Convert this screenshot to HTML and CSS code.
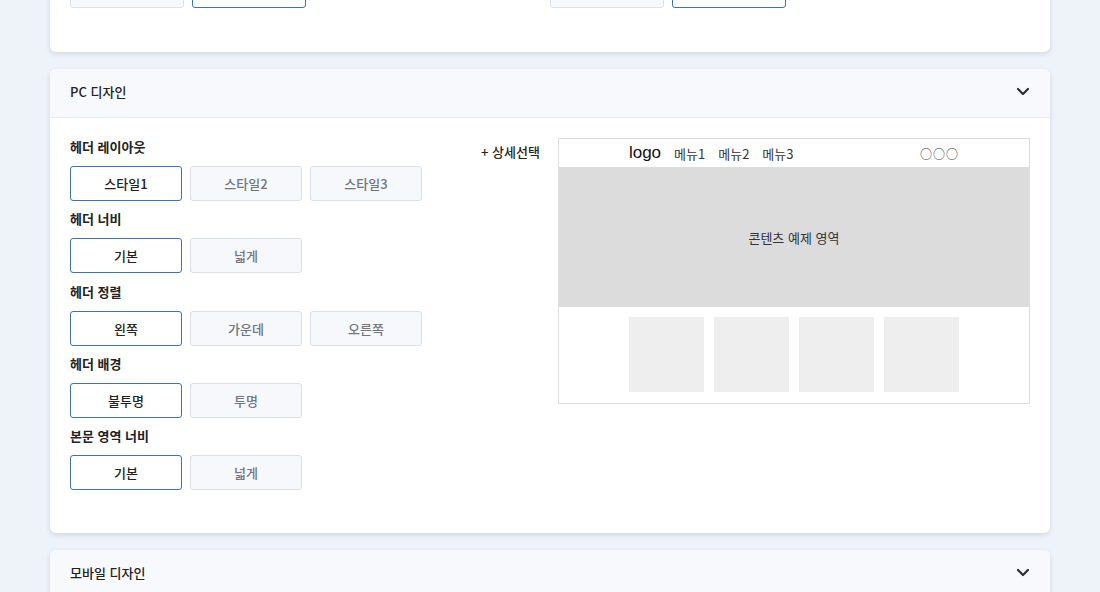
FILE: index.html
```html
<!DOCTYPE html>
<html lang="ko">
<head>
    <title>디자인 설정</title>
    <link rel="stylesheet" href="styles.css">
</head>
<body>
    <div class="page">
        <!-- 이전 섹션 (스크롤로 윗부분이 가려짐) -->
        <div class="card">
            <div class="card-body two-col">
                <div class="col">
                    <div class="btn-group wide">
                        <button class="opt">옵션1</button>
                        <button class="opt active">옵션2</button>
                    </div>
                </div>
                <div class="col">
                    <div class="btn-group wide">
                        <button class="opt">옵션1</button>
                        <button class="opt active">옵션2</button>
                    </div>
                </div>
            </div>
        </div>

        <!-- PC 디자인 -->
        <div class="card">
            <div class="card-header">
                <span>PC 디자인</span>
                <svg class="chevron" width="14" height="9" viewBox="0 0 14 9"><path d="M2 2 L7 7 L12 2" fill="none" stroke="#2b2f36" stroke-width="2.2" stroke-linecap="round" stroke-linejoin="round"/></svg>
            </div>
            <div class="card-body pc-body">
                <div class="options">
                    <div class="field">
                        <div class="field-label">헤더 레이아웃</div>
                        <div class="btn-group">
                            <button class="opt active">스타일1</button>
                            <button class="opt">스타일2</button>
                            <button class="opt">스타일3</button>
                        </div>
                    </div>
                    <div class="field">
                        <div class="field-label">헤더 너비</div>
                        <div class="btn-group">
                            <button class="opt active">기본</button>
                            <button class="opt">넓게</button>
                        </div>
                    </div>
                    <div class="field">
                        <div class="field-label">헤더 정렬</div>
                        <div class="btn-group">
                            <button class="opt active">왼쪽</button>
                            <button class="opt">가운데</button>
                            <button class="opt">오른쪽</button>
                        </div>
                    </div>
                    <div class="field">
                        <div class="field-label">헤더 배경</div>
                        <div class="btn-group">
                            <button class="opt active">불투명</button>
                            <button class="opt">투명</button>
                        </div>
                    </div>
                    <div class="field">
                        <div class="field-label">본문 영역 너비</div>
                        <div class="btn-group">
                            <button class="opt active">기본</button>
                            <button class="opt">넓게</button>
                        </div>
                    </div>
                </div>

                <div class="detail-link">+ 상세선택</div>

                <div class="preview">
                    <div class="preview-header">
                        <div class="preview-inner">
                            <span class="logo">logo</span>
                            <span class="menu">메뉴1</span>
                            <span class="menu">메뉴2</span>
                            <span class="menu">메뉴3</span>
                            <span class="icons">○○○</span>
                        </div>
                    </div>
                    <div class="preview-content">콘텐츠 예제 영역</div>
                    <div class="preview-footer">
                        <div class="preview-inner thumbs">
                            <div class="thumb"></div>
                            <div class="thumb"></div>
                            <div class="thumb"></div>
                            <div class="thumb"></div>
                        </div>
                    </div>
                </div>
            </div>
        </div>

        <!-- 모바일 디자인 -->
        <div class="card">
            <div class="card-header">
                <span>모바일 디자인</span>
                <svg class="chevron" width="14" height="9" viewBox="0 0 14 9"><path d="M2 2 L7 7 L12 2" fill="none" stroke="#2b2f36" stroke-width="2.2" stroke-linecap="round" stroke-linejoin="round"/></svg>
            </div>
            <div class="card-body mobile-body"></div>
        </div>
    </div>
</body>
</html>
```

FILE: styles.css
```css
body {
    margin: 0;
    font-family: "Noto Sans CJK KR", "Noto Sans", sans-serif;
    background-color: #eef2f9;
    color: #222;
    font-size: 13px;
}
.page {
    margin: -47px 50px 0 50px;
}
.card {
    background-color: white;
    border-radius: 6px;
    box-shadow: 0 2px 5px rgba(40, 60, 100, 0.14);
    margin-bottom: 17px;
    overflow: hidden;
}
.card-header {
    height: 48px;
    box-sizing: border-box;
    display: flex;
    align-items: center;
    justify-content: space-between;
    padding: 0 20px 3px 20px;
    background-color: #f8f9fc;
    border-bottom: 1px solid #e8ebf1;
    font-size: 13px;
    font-weight: 500;
    color: #222;
}
.card-header + .card-body {
    border-top: 0;
}
.card-body {
    padding: 20px 20px 43px 20px;
}
.card-header {
    height: 49px;
}
.two-col {
    display: flex;
    padding-bottom: 44px;
}
.two-col .col {
    width: 50%;
}
.btn-group {
    display: flex;
    gap: 8px;
}
.btn-group.wide {
    gap: 8px;
}
.btn-group.wide .opt {
    width: 114px;
}
.opt {
    width: 112px;
    height: 35px;
    border: 1px solid #dde0e9;
    border-radius: 3px;
    background-color: #f7f8fc;
    color: #6f7582;
    font-family: inherit;
    font-size: 13px;
    font-weight: 500;
    padding: 0;
    cursor: pointer;
}
.opt.active {
    background-color: white;
    border-color: #3d72b6;
    color: #222;
}
.pc-body {
    display: flex;
    align-items: flex-start;
}
.options {
    width: 400px;
    display: flex;
    flex-direction: column;
    gap: 9.25px;
}
.field-label {
    font-weight: 700;
    line-height: 18px;
    margin-bottom: 10px;
    color: #222;
}
.detail-link {
    margin: 5px 18px 0 11px;
    line-height: 18px;
    font-weight: 500;
    white-space: nowrap;
    color: #222;
}
.preview {
    flex: 1;
    border: 1px solid #dddddd;
    font-family: "Noto Sans CJK KR", "Liberation Sans", sans-serif;
}
.preview-inner {
    width: 330px;
    margin: 0 auto;
}
.preview-header {
    height: 28px;
    display: flex;
    align-items: center;
}
.preview-header .preview-inner {
    display: flex;
    align-items: center;
}
.logo {
    font-family: "Liberation Sans", sans-serif;
    font-size: 17px;
    margin-right: 13px;
    color: #111;
}
.menu {
    font-size: 13px;
    margin-right: 13px;
    color: #333;
}
.icons {
    margin-left: auto;
    font-size: 12px;
    letter-spacing: 1px;
    color: #333;
}
.preview-content {
    height: 140px;
    background-color: #dcdcdc;
    display: flex;
    align-items: center;
    justify-content: center;
    font-size: 13px;
    color: #333;
}
.preview-footer {
    padding: 10px 0 11px 0;
}
.thumbs {
    display: flex;
    gap: 10px;
}
.thumb {
    width: 75px;
    height: 75px;
    background-color: #eeeeee;
}
.mobile-body {
    height: 40px;
}
```
